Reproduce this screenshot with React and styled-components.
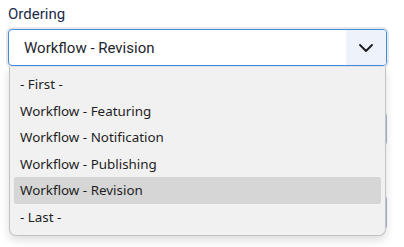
import styled, { createGlobalStyle } from 'styled-components';

const GlobalStyle = createGlobalStyle`
  body {
    margin: 0;
    background: #fff;
    font-family: Roboto, 'Liberation Sans', sans-serif;
  }
`;

const Page = styled.div`
  position: relative;
  width: 404px;
  height: 247px;
  overflow: hidden;
  padding: 4px 0 0 8px;
  box-sizing: border-box;
`;

const Field = styled.div`
  display: flex;
  flex-direction: column;
  width: 379px;
`;

const Label = styled.label`
  font-size: 15px;
  line-height: 20px;
  color: #1c2b4c;
  margin-bottom: 5px;
`;

const SelectBox = styled.div`
  display: flex;
  align-items: stretch;
  height: 37px;
  box-sizing: border-box;
  border: 1px solid #3f8ce3;
  border-radius: 4px;
  box-shadow: 0 0 0 2px #e8e8e8;
  background: #fff;
  overflow: hidden;
`;

const Value = styled.div`
  flex: 1;
  display: flex;
  align-items: center;
  padding-left: 15px;
  font-size: 15px;
  color: #22262a;
`;

const Toggle = styled.div`
  width: 40px;
  display: flex;
  align-items: center;
  justify-content: center;
  background: #edf2fb;
`;

/* inputs further down the form, covered by the open list */
const HiddenInput = styled.div`
  width: 377px;
  height: ${p => p.h}px;
  margin: ${p => p.top}px 0 0 2px;
  box-sizing: border-box;
  border: 1px solid #a9b7d3;
  border-radius: 4px;
  background: #fff;
`;

const Menu = styled.ul`
  position: absolute;
  top: 67px;
  left: 9px;
  width: 377px;
  margin: 0;
  padding: 4px 4px 5px;
  box-sizing: border-box;
  list-style: none;
  background: #f1f1f1;
  border: 1px solid #c2c2c2;
  border-top: none;
  border-radius: 0 0 7px 7px;
  box-shadow: 0 4px 10px rgba(0, 0, 0, 0.14);
  font-family: 'Noto Sans', 'Open Sans', sans-serif;
`;

const Option = styled.li`
  height: 26.5px;
  display: flex;
  align-items: center;
  padding-left: 6px;
  font-size: 13.4px;
  color: #1e1e1e;
  border-radius: 2px;
  background: ${p => (p.selected ? '#d6d6d6' : 'transparent')};
`;

const options = [
  '- First -',
  'Workflow - Featuring',
  'Workflow - Notification',
  'Workflow - Publishing',
  'Workflow - Revision',
  '- Last -',
];

const Chevron = () => (
  <svg width="14" height="8" viewBox="0 0 14 8" fill="none">
    <path d="M1 1l6 6 6-6" stroke="#1a1a1a" strokeWidth="1.8" strokeLinecap="round" strokeLinejoin="round" />
  </svg>
);

export default function App() {
  return (
    <>
      <GlobalStyle />
      <Page>
        <Field>
          <Label>Ordering</Label>
          <SelectBox>
            <Value>Workflow - Revision</Value>
            <Toggle>
              <Chevron />
            </Toggle>
          </SelectBox>
        </Field>
        <HiddenInput top={46} h={34} />
        <HiddenInput top={49} h={35} />
        <Menu>
          {options.map(o => (
            <Option key={o} selected={o === 'Workflow - Revision'}>
              {o}
            </Option>
          ))}
        </Menu>
      </Page>
    </>
  );
}
